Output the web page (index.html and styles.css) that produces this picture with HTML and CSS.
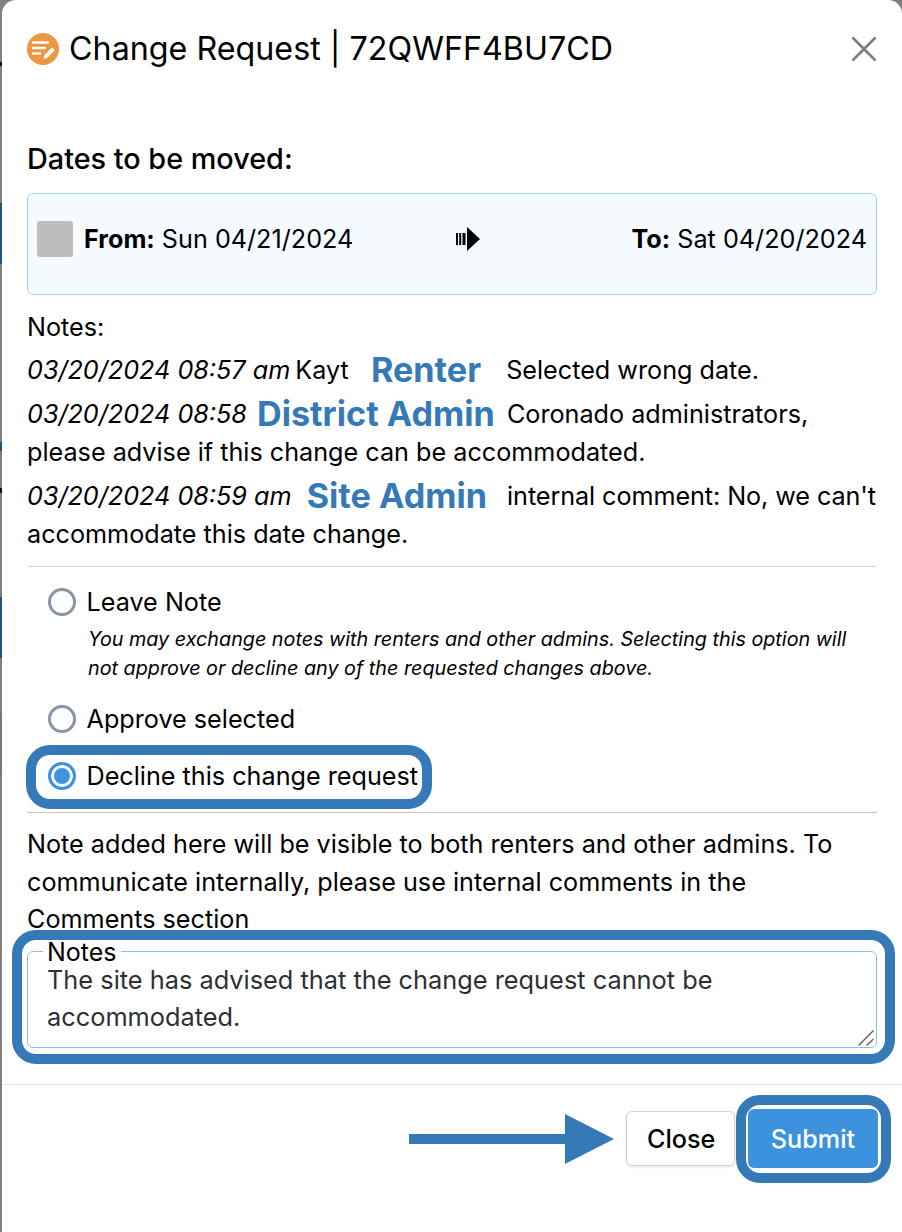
FILE: index.html
```html
<!DOCTYPE HTML>
<html lang="en">
  <head>
    <title>Change Request</title>
    <meta charset="utf-8" />
    <link rel="stylesheet" href="styles.css">
  </head>
  <body>
    <div class='modal'>
      <div class='modal-header'>
        <svg class='title-icon' viewBox="0 0 32 32">
          <circle cx="16" cy="16" r="16" fill="#ed9640"/>
          <path d="M6 9.500h15M6 15h12M6 20.500h7" stroke="#fff" stroke-width="2.400" stroke-linecap="round" fill="none"/>
          <path d="M16.500 26l1-4 7.500-7.500 2.800 2.800-7.500 7.500z" fill="#fff"/>
        </svg>
        <h1 class='title'>Change Request | 72QWFF4BU7CD</h1>
        <svg class='close-x' viewBox="0 0 26 26">
          <path d="M1.500 1.500l23 23M24.500 1.500l-23 23" stroke="#7d7d7d" stroke-width="2.600" fill="none"/>
        </svg>
      </div>

      <div class='modal-body'>
        <h2 class='subhead'>Dates to be moved:</h2>
        <div class='dates'>
          <div class='swatch'></div>
          <div class='date date-from'><b>From:</b> Sun 04/21/2024</div>
          <svg class='date-arrow' viewBox="0 0 24 24">
            <path d="M0 6h2v12H0zM3.200 6h2v12h-2zM6.500 6h3v12h-3zM11 0l13 12-13 12z" fill="#000"/>
          </svg>
          <div class='date date-to'><b>To:</b> Sat 04/20/2024</div>
        </div>

        <div class='notes-label'>Notes:</div>
        <p class='note'><i>03/20/2024 08:57 am</i> <span class='author'>Kayt</span> <span class='role role-renter'>Renter</span> Selected wrong date.</p>
        <p class='note'><i>03/20/2024 08:58</i> <span class='role role-district'>District Admin</span> Coronado administrators, please advise if this change can be accommodated.</p>
        <p class='note'><i>03/20/2024 08:59 am</i> <span class='role role-site'>Site Admin</span> <span class='tight'>internal comment: No, we can't</span> accommodate this date change.</p>

        <div class='rule rule-light'></div>

        <div class='options'>
          <label class='option'><input class='radio' type="radio" name="action"> Leave Note</label>
          <p class='hint'>You may exchange notes with renters and other admins. Selecting this option will not approve or decline any of the requested changes above.</p>
          <label class='option'><input class='radio' type="radio" name="action"> Approve selected</label>
          <label class='option option-decline'><input class='radio' type="radio" name="action" checked> Decline this change request</label>
        </div>

        <div class='rule rule-grey'></div>

        <p class='visible-note'>Note added here will be visible to both renters and other admins. To communicate internally, please use internal comments in the Comments section</p>

        <fieldset class='notes-box'>
          <legend class='notes-legend'>Notes</legend>
          <textarea class='notes-input' spellcheck="false">The site has advised that the change request cannot be accommodated.</textarea>
          <svg class='grip' viewBox="0 0 16 16">
            <path d="M0.500 15.500l15-15M8.500 15.500l7-6.500" stroke="#666" stroke-width="1.500" fill="none"/>
          </svg>
        </fieldset>
      </div>

      <div class='modal-footer'>
        <button class='btn btn-close'>Close</button>
        <button class='btn btn-submit'>Submit</button>
      </div>

      <div class='ring ring-decline'></div>
      <div class='ring ring-notes'></div>
      <div class='ring ring-submit'></div>
      <svg class='callout-arrow' viewBox="0 0 205 50">
        <path d="M0 20h156V0l49 25-49 25V30H0z" fill="#357ab7"/>
      </svg>
    </div>
  </body>
</html>
```

FILE: styles.css
```css
* {
  box-sizing: border-box;
}

html,
body {
  height: 100%;
}

body {
  margin: 0;
  overflow: hidden;
  /* page behind the dialog, only a 2px sliver of it shows */
  background: linear-gradient(to bottom,
    #7f7f7f 62px, #111 62px, #111 66px,
    #7f7f7f 66px, #7f7f7f 203px, #1f5580 203px, #1f5580 264px,
    #7f7f7f 264px, #7f7f7f 442px, #1f5580 442px, #1f5580 451px,
    #7f7f7f 451px, #7f7f7f 488px, #111 488px, #111 493px,
    #7f7f7f 493px, #7f7f7f 597px, #1f5580 597px, #1f5580 658px,
    #7f7f7f 658px, #7f7f7f 713px, #84707a 713px, #84707a 774px,
    #7f7f7f 774px);
  font-family: Inter, "Liberation Sans", sans-serif;
  font-size: 25.2px;
  line-height: 38px;
  color: #000;
}

.modal {
  position: relative;
  display: flex;
  flex-direction: column;
  height: 100%;
  margin-left: 2px;
  background-color: #fff;
  border-radius: 14px 14px 0 0;
}

.modal-header {
  display: flex;
  align-items: center;
  height: 98px;
  padding: 0 25px 0 25px;
}

.title-icon {
  width: 32px;
  height: 32px;
  margin-right: 10px;
}

.title {
  flex: 1;
  margin: 0;
  font-size: 32.25px;
  font-weight: 400;
}

.close-x {
  width: 26px;
  height: 26px;
}

.modal-body {
  padding: 42px 25px 0 25px;
}

.subhead {
  margin: 0 0 15px;
  font-size: 28.8px;
  font-weight: 500;
}

.dates {
  display: flex;
  align-items: center;
  justify-content: space-between;
  height: 102px;
  padding: 0 9px 10px 9px;
  margin-bottom: 13px;
  background-color: #f5faff;
  border: 1px solid #a3d0f2;
  border-radius: 6px;
}

.swatch {
  width: 36px;
  height: 36px;
  margin-right: 11px;
  background-color: #bdbdbd;
  border-radius: 3px;
}

.date b {
  font-weight: 700;
}

.date-from {
  width: 372px;
}

.date-arrow {
  width: 24px;
  height: 24px;
}

.date-to {
  margin-left: auto;
}

.notes-label {
  height: 43px;
}

.note {
  margin: 0 0 6px;
}

.author {
  margin-left: -2px;
}

.role {
  font-size: 34.2px;
  font-weight: 700;
  line-height: 28px;
  vertical-align: -3px;
  color: #357ab7;
}

.role-renter {
  margin: 0 18px 0 15px;
}

.role-district {
  margin: 0 5px 0 3px;
}

.role-site {
  margin: 0 13px 0 8px;
}

.tight {
  letter-spacing: -0.08px;
}

.rule {
  height: 1px;
}

.rule-light {
  margin-top: 13px;
  background-color: #cbd5e0;
}

.rule-grey {
  background-color: #c4c4c4;
}

.options {
  padding: 16px 0 0 21px;
}

.option {
  display: flex;
  align-items: center;
  gap: 10.500px;
  height: 38px;
}

.radio {
  appearance: none;
  width: 28px;
  height: 28px;
  margin: 0;
  background-color: #fff;
  border: 3px solid #8a95a3;
  border-radius: 50%;
}

.radio:checked {
  border-color: #3d92de;
  box-shadow: inset 0 0 0 3px #fff;
  background-color: #3d92de;
}

.hint {
  margin: 4px 0 17px 40px;
  font-size: 19.75px;
  font-style: italic;
  line-height: 29px;
}

.option-decline {
  margin: 19px 0 17px;
}

.visible-note {
  margin: 13px 0 0;
  line-height: 37.5px;
}

.notes-box {
  position: relative;
  height: 108px;
  padding: 0;
  margin: 1px 0 0;
  border: 1px solid #90bdf0;
  border-radius: 6px;
}

.notes-legend {
  padding: 0 4px;
  margin-left: 15px;
  font-size: 25px;
  line-height: 24px;
}

.notes-input {
  display: block;
  width: 100%;
  height: 84px;
  padding: 0 19px;
  margin-top: -3px;
  border: 0;
  outline: 0;
  background: transparent;
  font: inherit;
  font-size: 25.35px;
  line-height: 37px;
  color: #2d3033;
  resize: none;
}

.grip {
  position: absolute;
  right: 2px;
  bottom: 1px;
  width: 16px;
  height: 16px;
}

.modal-footer {
  display: flex;
  justify-content: flex-end;
  gap: 13px;
  padding: 26px 24px 0 0;
  margin-top: 36px;
  border-top: 1px solid #e2e8f0;
}

.btn {
  height: 55px;
  padding: 2px 20px 0;
  font-family: inherit;
  font-size: 25.2px;
  font-weight: 500;
  border-radius: 6px;
}

.btn-close {
  width: 109px;
  color: #000;
  background-color: #fff;
  border: 1px solid #cbd5e0;
  box-shadow: 0 1px 3px rgba(0, 0, 0, 0.12);
}

.btn-submit {
  width: 130px;
  height: 59px;
  margin-top: -2px;
  color: #fff;
  background-color: #3d92de;
  border: 0;
}

/* annotations drawn on top of the screenshot */
.ring {
  position: absolute;
  border: 10px solid #357ab7;
  pointer-events: none;
}

.ring-decline {
  left: 24px;
  top: 745px;
  width: 406px;
  height: 64px;
  border-radius: 24px;
}

.ring-notes {
  left: 10px;
  top: 930px;
  width: 883px;
  height: 134px;
  border-radius: 24px;
}

.ring-submit {
  left: 734px;
  top: 1095px;
  width: 155px;
  height: 88px;
  border-radius: 24px;
}

.callout-arrow {
  position: absolute;
  left: 407px;
  top: 1114px;
  width: 205px;
  height: 50px;
}
```
